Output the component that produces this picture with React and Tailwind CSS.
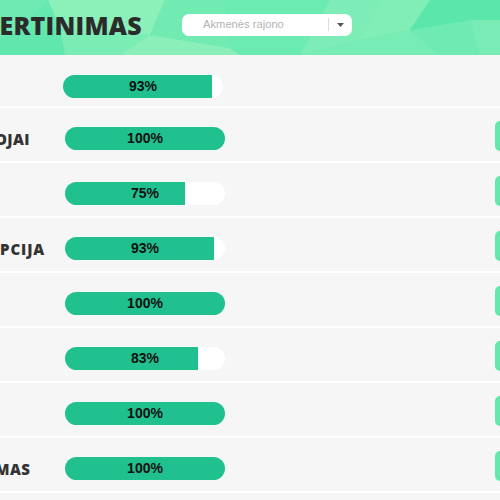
const ROWS = [
  { label: '', pct: 93, first: true },
  { label: 'OJAI', pct: 100, shift: '-ml-[5px]' },
  { label: '', pct: 75 },
  { label: 'PCIJA', pct: 93, shift: 'ml-[0px] tracking-[0.9px]' },
  { label: '', pct: 100 },
  { label: '', pct: 83 },
  { label: '', pct: 100 },
  { label: 'MAS', pct: 100, shift: '-ml-[5px]' },
]

function HeaderPattern() {
  return (
    <svg className="absolute inset-0 w-full h-full" viewBox="0 0 500 55" preserveAspectRatio="none">
      <rect width="500" height="55" fill="#66e9b0" />
      <polygon points="0,0 48,0 20,30 0,38" fill="#6feab3" />
      <polygon points="48,0 165,0 150,35 60,28" fill="#8cf0b9" />
      <polygon points="0,38 20,30 60,28 65,55 0,55" fill="#5fe7ad" />
      <polygon points="60,28 150,35 120,55 65,55" fill="#7aedb5" />
      <polygon points="150,35 230,48 240,55 120,55" fill="#8aefb8" />
      <polygon points="165,0 225,0 230,48 150,35" fill="#72ebb3" />
      <polygon points="225,0 330,0 300,55 240,55 230,48" fill="#6beab1" />
      <polygon points="330,0 380,0 360,40 300,55" fill="#7decb6" />
      <polygon points="380,0 430,0 410,30 360,40" fill="#82eeb7" />
      <polygon points="360,40 410,30 440,55 300,55" fill="#77ecb4" />
      <polygon points="410,30 470,20 480,55 440,55" fill="#6eeab2" />
      <polygon points="430,0 500,0 500,20 470,20 410,30" fill="#5be6ab" />
      <polygon points="470,20 500,20 500,55 480,55" fill="#79ecb5" />
    </svg>
  )
}

function Bar({ pct }) {
  return (
    <div className="relative w-[160px] h-[23px] rounded-full bg-white overflow-hidden shrink-0">
      <div className="h-full bg-[#20c08f]" style={{ width: `${pct}%` }} />
      <span className="absolute inset-0 flex items-center justify-center text-[14px] font-bold text-[#111] font-['Liberation_Sans',Arial,sans-serif]">
        {pct}%
      </span>
    </div>
  )
}

export default function App() {
  return (
    <div className="w-[500px] h-[500px] overflow-hidden bg-[#f6f6f6] font-['Open_Sans',sans-serif]">
      <div className="relative h-[55px] bg-[#66e9b0]">
        <HeaderPattern />
        <div className="relative flex items-center h-full">
          <div className="w-[182px] shrink-0 overflow-hidden">
            <h1 className="-ml-[18px] mt-[-4px] text-[25px] font-extrabold text-[#2b2b2b] tracking-[0.2px] whitespace-nowrap">
              VERTINIMAS
            </h1>
          </div>
          <div className="flex items-center w-[170px] h-[22px] rounded-[7px] bg-white pl-[21px] pr-[8px] mt-[-6px]">
            <span className="flex-1 text-[11.2px] text-[#b3b3b3] font-['Liberation_Sans',Arial,sans-serif]">Akmenės rajono</span>
            <span className="w-px h-[13px] bg-[#dddddd]" />
            <svg width="7" height="4" viewBox="0 0 7 4" className="ml-[8px]">
              <polygon points="0,0 7,0 3.5,4" fill="#555" />
            </svg>
          </div>
        </div>
      </div>

      {ROWS.map((r, i) => (
        <div
          key={i}
          className={`flex items-start border-b-2 border-white ${r.first ? 'h-[53px]' : 'h-[55px]'}`}
        >
          <div className={`${r.first ? 'w-[63px] mt-[20px]' : 'w-[65px] mt-[19px]'} h-[23px] shrink-0 flex items-center overflow-hidden`}>
            {r.label && (
              <span className={`${r.shift} mt-[2px] text-[15px] font-extrabold text-[#333] tracking-[0.4px] whitespace-nowrap`}>{r.label}</span>
            )}
          </div>
          <div className={r.first ? 'mt-[20px]' : 'mt-[19px]'}>
            <Bar pct={r.pct} />
          </div>
          <div className="flex-1" />
          {!r.first && (
            <div className="mt-[13px] w-[20px] h-[30px] rounded-[5px] bg-[#62e8ad] mr-[-15px] shrink-0" />
          )}
        </div>
      ))}
    </div>
  )
}
